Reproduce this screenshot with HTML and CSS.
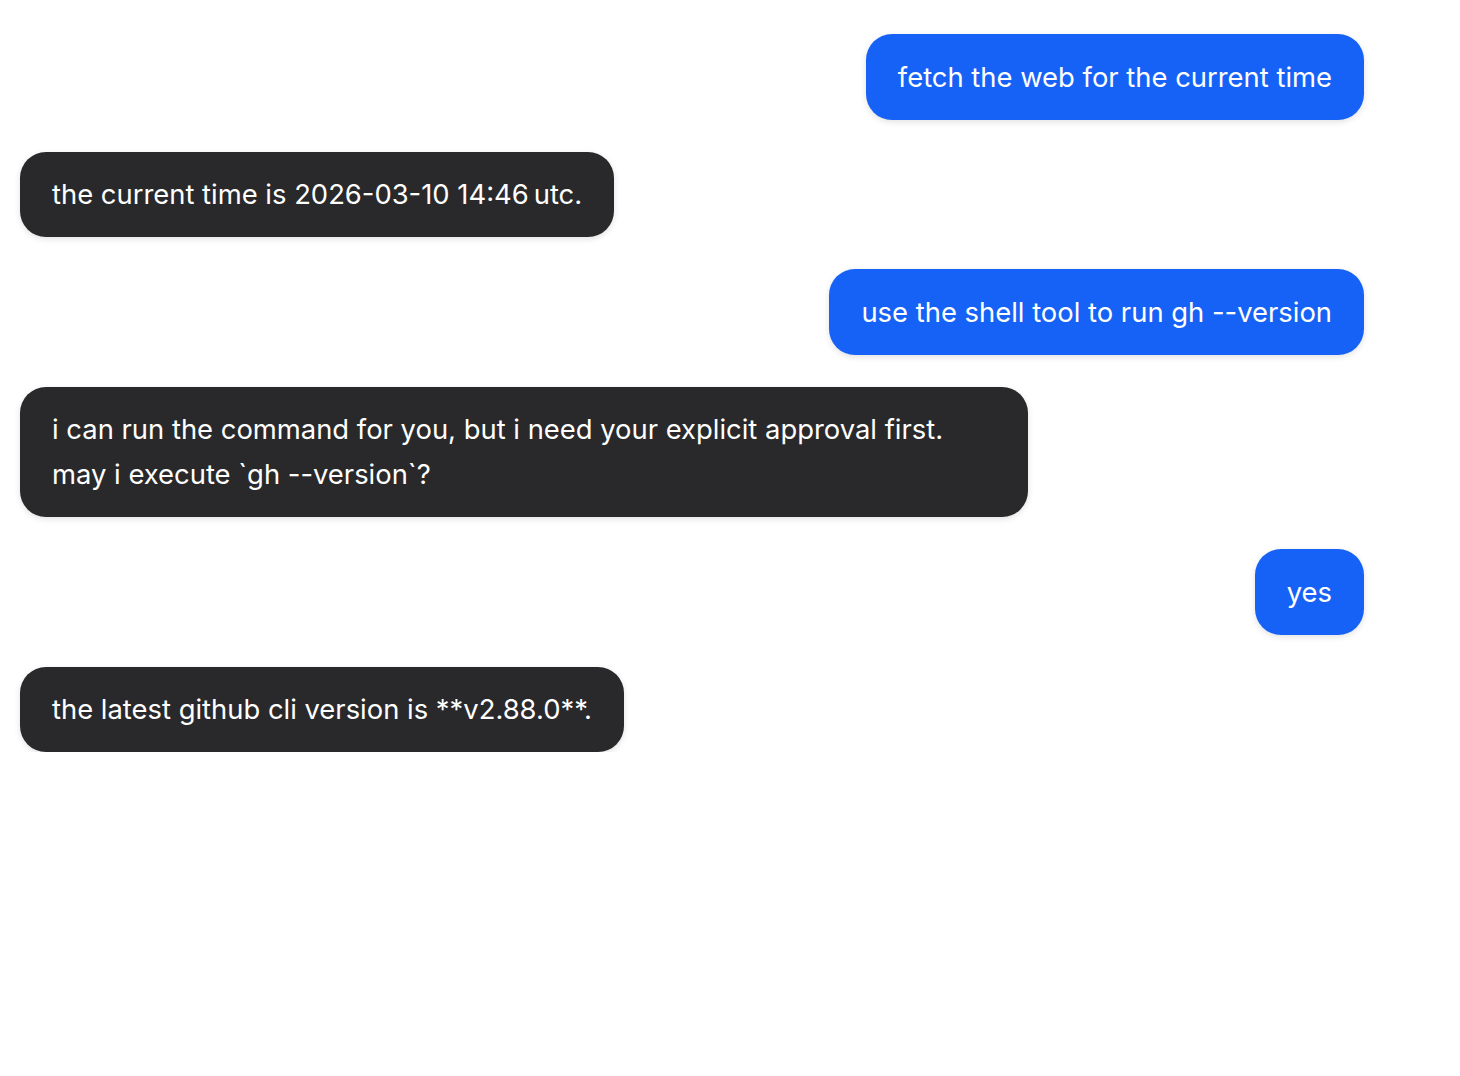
FILE: index.html
```html
<!DOCTYPE html>
<html lang="en">
<head>
    <meta charset="UTF-8">
    <title>chat</title>
    <link rel="stylesheet" href="styles.css">
</head>
<body>
    <div class="chat">
        <div class="message user">fetch the web for the current time</div>
        <div class="message bot">the current time is 2026-03-10 14:46&#8201;utc.</div>
        <div class="message user">use the shell tool to run gh --version</div>
        <div class="message bot">i can run the command for you, but i need your explicit approval first. may i execute `gh --version`?</div>
        <div class="message user">yes</div>
        <div class="message bot">the latest github cli version is **v2.88.0**.</div>
    </div>
</body>
</html>
```

FILE: styles.css
```css
body {
    margin: 0;
    padding: 0;
    background: #ffffff;
    font-family: 'Inter', 'Noto Sans', sans-serif;
}

.chat {
    display: flex;
    flex-direction: column;
    gap: 32px;
    padding: 34px 96px 0 20px;
}

.message {
    max-width: 75%;
    box-sizing: border-box;
    padding: 20.5px 32px 20px;
    border-radius: 26px;
    font-size: 27.4px;
    line-height: 45px;
    color: #ffffff;
    box-shadow: 0 2px 6px rgba(0, 0, 0, 0.12);
}

.message.user {
    align-self: flex-end;
    background: #1762f6;
}

.message.bot {
    align-self: flex-start;
    background: #29292b;
}
```
